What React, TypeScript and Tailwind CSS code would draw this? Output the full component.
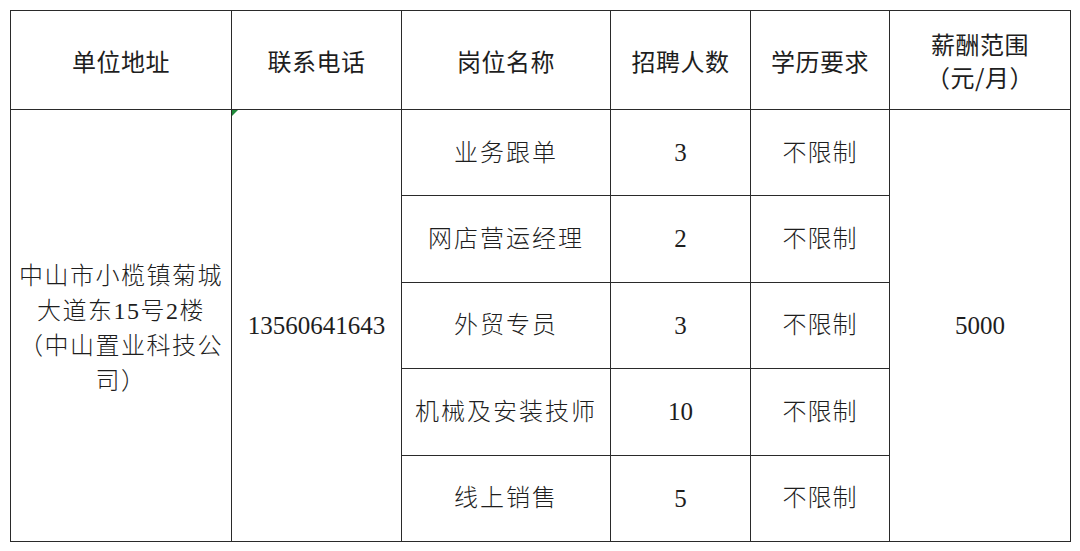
const cjk = '"Noto Sans CJK SC", sans-serif';
const mixed = '"Liberation Serif", "Noto Sans CJK SC", serif';

const rows = [
  { title: "业务跟单", count: "3" },
  { title: "网店营运经理", count: "2" },
  { title: "外贸专员", count: "3" },
  { title: "机械及安装技师", count: "10" },
  { title: "线上销售", count: "5" },
];

const headers = ["单位地址", "联系电话", "岗位名称", "招聘人数", "学历要求"];

export default function App() {
  const cell = "border-[1.5px] border-[#2a2a2a] text-center align-middle";
  return (
    <div className="w-[1080px] h-[551px] bg-white p-[10px] text-[#1e1e1e]">
      <table className="border-collapse table-fixed w-[1060px]">
        <colgroup>
          <col className="w-[221px]" />
          <col className="w-[170px]" />
          <col className="w-[209px]" />
          <col className="w-[140px]" />
          <col className="w-[139px]" />
          <col className="w-[181px]" />
        </colgroup>
        <thead>
          <tr className="h-[99px]">
            {headers.map((h) => (
              <th
                key={h}
                className={`${cell} text-[24px] font-normal leading-[33px] tracking-[0.5px]`}
                style={{ fontFamily: cjk }}
              >
                {h}
              </th>
            ))}
            <th
              className={`${cell} text-[24px] font-normal leading-[33px] tracking-[0.5px]`}
              style={{ fontFamily: cjk }}
            >
              薪酬范围
              <br />
              （元/月）
            </th>
          </tr>
        </thead>
        <tbody className="text-[24px] font-light" style={{ fontFamily: mixed }}>
          {rows.map((r, i) => (
            <tr key={r.title} className="h-[86.4px]">
              {i === 0 && (
                <>
                  <td rowSpan={5} className={`${cell} px-[5px] pt-[8px] leading-[35px] tracking-[1.5px]`}>
                    中山市小榄镇菊城大道东15号2楼（中山置业科技公司）
                  </td>
                  <td rowSpan={5} className={`${cell} relative text-[25px]`}>
                    <span className="absolute left-0 top-0 w-0 h-0 border-t-[6px] border-t-[#1f8a3a] border-r-[6px] border-r-transparent" />
                    13560641643
                  </td>
                </>
              )}
              <td className={`${cell} tracking-[2px]`}>{r.title}</td>
              <td className={`${cell} text-[25px]`}>{r.count}</td>
              <td className={`${cell} tracking-[1px]`}>不限制</td>
              {i === 0 && (
                <td rowSpan={5} className={`${cell} text-[25px]`}>
                  5000
                </td>
              )}
            </tr>
          ))}
        </tbody>
      </table>
    </div>
  );
}
